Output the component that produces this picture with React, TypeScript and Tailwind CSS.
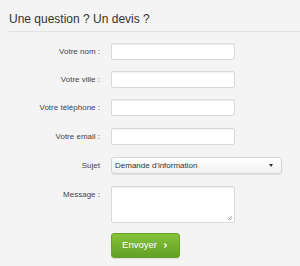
import { ChevronRight } from "lucide-react";

const fields = [
    { label: "Votre nom :", mt: "mt-[11px]" },
    { label: "Votre ville :", mt: "mt-[11px]" },
    { label: "Votre téléphone :", mt: "mt-[11px]" },
    { label: "Votre email :", mt: "mt-[12px]" },
];

const inputCls = "h-[17px] w-[124px] rounded-[2px] border border-[#d9d9d9] bg-white shadow-[inset_0_1px_1px_rgba(0,0,0,0.06)]";

export default function App() {
    return (
        <div className="h-[266px] w-[300px] overflow-hidden bg-[#f4f4f4] font-['Liberation_Sans',Arial,sans-serif] text-[#333]">
            <div className="pl-[9px] pt-[12px]">
                <h2 className="text-[12px] leading-[14px] text-[#333]">Une question ? Un devis ?</h2>
                <div className="mt-[5px] h-px bg-[#e2e2e2]" />
            </div>

            <form className="mt-[11px] flex flex-col">
                {fields.map((f, i) => (
                    <div key={f.label} className={`${i === 0 ? "" : f.mt} flex items-center`}>
                        <label className="w-[100px] text-right text-[8px] text-[#444]">{f.label}</label>
                        <div className="ml-[11px]">
                            <div className={inputCls} />
                        </div>
                    </div>
                ))}

                <div className="mt-[12px] flex items-center">
                    <label className="w-[100px] text-right text-[8px] text-[#444]">Sujet</label>
                    <div className="ml-[11px] flex h-[17px] w-[171px] items-center justify-between rounded-[3px] border border-[#d4d4d4] bg-gradient-to-b from-white to-[#f1f1f1] pl-[3px] pr-[8px] shadow-[0_1px_1px_rgba(0,0,0,0.08)]">
                        <span className="text-[8px] leading-none text-[#333]">Demande d'information</span>
                        <span className="h-0 w-0 border-x-[2.5px] border-t-[3px] border-x-transparent border-t-[#333]" />
                    </div>
                </div>

                <div className="mt-[12px] flex items-start">
                    <label className="mt-[3px] w-[100px] text-right text-[8px] text-[#444]">Message :</label>
                    <div className="relative ml-[11px] h-[37px] w-[124px] rounded-[2px] border border-[#d9d9d9] bg-white shadow-[inset_0_1px_1px_rgba(0,0,0,0.06)]">
                        <svg className="absolute bottom-[1px] right-[1px]" width="6" height="6" viewBox="0 0 6 6">
                            <path d="M5 1L1 5M5 3L3 5" stroke="#999" strokeWidth="0.8" />
                        </svg>
                    </div>
                </div>

                <div className="ml-[111px] mt-[10px]">
                    <button type="button" className="flex h-[25px] w-[69px] items-center justify-center gap-[5px] rounded-[3px] border border-[#6a9f2a] bg-gradient-to-b from-[#86c23a] to-[#62a124] text-[9.5px] text-white shadow-[0_1px_1px_rgba(0,0,0,0.1)]">
                        Envoyer
                        <ChevronRight className="h-[7px] w-[7px]" strokeWidth={4} />
                    </button>
                </div>
            </form>
        </div>
    );
}
